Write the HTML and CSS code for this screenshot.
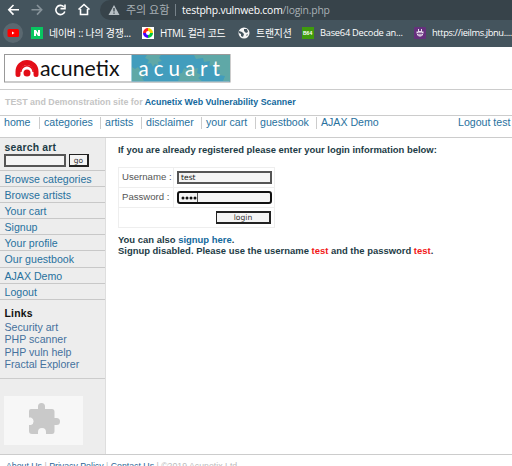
FILE: index.html
```html
<!DOCTYPE html>
<html lang="ko">
<head>
<meta charset="utf-8">
<title>login page</title>
<link rel="stylesheet" href="styles.css">
</head>
<body>
<header class="browser">
  <div class="toolbar">
    <svg class="controls" width="100" height="20" viewBox="0 0 100 20" fill="none" stroke="#fff" stroke-width="1.6">
      <path d="M19 9.800H9M13.500 5L8.800 9.800L13.500 14.600"/>
      <path stroke="#87939a" d="M31.500 9.800H41.500M37 5L41.700 9.800L37 14.600"/>
      <path d="M63.800 6.800A4.600 4.600 0 1 0 64.800 11.500M65 4.500V8.600H60.500"/>
      <path d="M78.500 9.500L84 4.500L89.500 9.500M80.500 9V14.500H87.500V9"/>
    </svg>
    <div class="address">
      <svg width="12" height="11" viewBox="0 0 12 11"><path fill="#b7bfc4" d="M6 0L11.500 10H.5Z"/><path stroke="#37434a" stroke-width="1.300" d="M6 3V6.500M6 7.500V8.800"/></svg>
      <span class="warn">주의 요함</span><i></i><span class="url">testphp.vulnweb.com<b>/login.php</b></span>
    </div>
  </div>
  <nav class="bookmarks">
    <svg class="tube" width="20" height="20" viewBox="0 0 20 20"><circle cx="10" cy="10" r="10" fill="#5a6870"/><rect x="4.500" y="6" width="11.500" height="8" rx="1.500" fill="#f00"/><path fill="#fff" d="M9 8.500V11.500L11.500 10Z"/></svg>
    <span class="bm naver"><svg width="12" height="12" viewBox="0 0 12 12"><rect width="12" height="12" fill="#08c560"/><path fill="#fff" d="M3 3H5L7 6V3H9V9H7L5 6V9H3Z"/></svg><em>네이버 :: 나의 경쟁...</em></span>
    <span class="bm color"><svg width="12" height="12" viewBox="0 0 12 12"><rect width="12" height="12" fill="#fff"/><g fill="none" stroke-width="3"><path stroke="#f22" d="M2.500 6A3.500 3.500 0 0 1 6 2.500"/><path stroke="#f8d000" d="M6 2.500A3.500 3.500 0 0 1 9.500 6"/><path stroke="#00c83c" d="M9.500 6A3.500 3.500 0 0 1 6 9.500"/><path stroke="#40f" d="M6 9.500A3.500 3.500 0 0 1 2.500 6"/></g></svg><em>HTML 컬러 코드</em></span>
    <span class="bm trans"><svg width="12" height="12" viewBox="0 0 12 12"><circle cx="6" cy="6" r="5.500" fill="#f5f5f5"/><path fill="#44545d" d="M1 4L4 5L6 7L5 10L3 9L3 7L1 6ZM6 2L9 2L10 5L8 6L6 4ZM8 8L10 7L9 9Z"/></svg><em>트랜지션</em></span>
    <span class="bm base"><svg width="12" height="12" viewBox="0 0 12 12"><rect width="12" height="12" fill="#3f9b0c"/><text class="badge" x="1" y="8">B64</text></svg><em>Base64 Decode an...</em></span>
    <span class="bm lms"><svg width="12" height="12" viewBox="0 0 12 12"><rect width="12" height="12" rx="1" fill="#65307d"/><path fill="#e9dfee" d="M4 2H5V4H7V2H8V4.500H9.500V6.500H9V8L7 9.500H5L3 8V6.500H2.500V4.500H4Z"/><path stroke="#65307d" stroke-width=".7" d="M3 6.500H9M5 5V8.500M7 5V8.500"/></svg><em>https://ieilms.jbnu....</em></span>
  </nav>
</header>
<div class="mast">
  <svg width="227" height="29" viewBox="0 0 227 29">
    <rect x=".5" y=".5" width="225.500" height="27.500" fill="#fff" stroke="#999"/>
    <rect x="127.500" y="1" width="98.500" height="26.500" fill="#429dbd"/>
    <g fill="#6cae9f" opacity=".7">
      <path d="M128 13L131 15L134 13L136 16L140 17L138 20L141 22L138 24L140 27H128Z"/>
      <path d="M143 1H157L155 4L158 7L154 8L155 12L151 10L149 13L147 9L143 10L145 6L141 4Z"/>
      <path d="M174 27L176 23L173 20L178 19L180 14L184 16L186 11L189 15L194 14L193 19L198 21L194 24L198 27Z"/>
      <path d="M190 1H226V27H219L221 22L215 21L216 16L210 17L211 11L205 12L206 7L200 8L199 4L192 5Z"/>
    </g>
    <path fill="none" stroke="#e30d17" stroke-width="5" stroke-linecap="round" d="M14 20.500V17.500A9 9 0 0 1 32 17.500V20.500"/><path fill="none" stroke="#e30d17" stroke-width="1.500" d="M16.800 18A6.200 6.200 0 0 1 29.200 18"/><circle cx="23" cy="19" r="3.500" fill="#e30d17"/>
    <text class="word" x="36" y="21.500" textLength="79.500" lengthAdjust="spacingAndGlyphs">acunetix</text>
    <text class="word art" x="134.500" y="21.500">acuart</text>
  </svg>
</div>
<div class="tag">TEST and Demonstration site for <a>Acunetix Web Vulnerability Scanner</a></div>
<nav class="menu"><a>home</a><a>categories</a><a>artists</a><a>disclaimer</a><a>your cart</a><a>guestbook</a><a>AJAX Demo</a><a class="out">Logout test</a></nav>
<div class="columns">
  <aside>
    <h3>search art</h3>
    <div class="search"><span class="field"></span><span class="go">go</span></div>
    <ul class="cats"><li>Browse categories</li><li>Browse artists</li><li>Your cart</li><li>Signup</li><li>Your profile</li><li>Our guestbook</li><li>AJAX Demo</li><li>Logout</li></ul>
    <div class="links"><h3>Links</h3><a>Security art</a><a>PHP scanner</a><a>PHP vuln help</a><a>Fractal Explorer</a></div>
    <div class="plugin"><svg width="33" height="33" viewBox="0 0 33 33"><path fill="#c9c9c9" d="M3 7H10V4.500A3.500 3.500 0 0 1 17 4.500V7H24Q26.500 7 26.500 10V16H28.500A3.500 3.500 0 0 1 28.500 23H26.500V29Q26.500 32 24 32H18V30A4 4 0 0 0 10 30V32H4Q1 32 1 29V23H3A4 4 0 0 0 3 15.500H1V9Q1 7 3 7Z"/></svg></div>
  </aside>
  <main>
    <h2>If you are already registered please enter your login information below:</h2>
    <div class="form">
      <span class="cell">Username :</span><span class="cell"><span class="field">test</span></span>
      <span class="cell">Password :</span><span class="cell"><span class="field pass"><svg width="20" height="9" viewBox="0 0 20 9"><g fill="#111"><circle cx="2" cy="5" r="1.500"/><circle cx="6" cy="5" r="1.500"/><circle cx="10" cy="5" r="1.500"/><circle cx="14" cy="5" r="1.500"/></g><path d="M16.500 0V9" stroke="#555"/></svg></span></span>
      <span class="cell wide"><span class="login">login</span></span>
    </div>
    <p class="also">You can also <a>signup here</a>.</p>
    <p class="note">Signup disabled. Please use the username <b>test</b> and the password <b>test</b>.</p>
  </main>
</div>
<footer><a>About Us</a> | <a>Privacy Policy</a> | <a>Contact Us</a> | ©2019 Acunetix Ltd</footer>
</body>
</html>
```
FILE: styles.css
```css
* { box-sizing: border-box; }
body { margin: 0; width: 512px; height: 466px; overflow: hidden; background: #fff; color: #1d3c46; font-family: "Liberation Sans", Arial, sans-serif; font-size: 10.6px; }
h2, h3, p, ul { margin: 0; padding: 0; }
svg { display: block; flex: none; }
.browser { height: 47px; background: #44545d; color: #fff; font-family: "Open Sans", "Noto Sans CJK KR", sans-serif; white-space: nowrap; }
.toolbar { height: 20px; display: flex; }
.address { flex: 1; display: flex; align-items: center; padding-left: 8px; background: #37434a; border-radius: 10px 0 0 10px; font-size: 11px; line-height: 20px; }
.warn { width: 45px; margin-left: 6px; color: #a8b0b5; font-size: 11px; }
.address i { width: 1px; height: 12px; margin: 0 6px 0 4px; background: #77828a; }
.url { font-size: 10.4px; letter-spacing: -.2px; }
.url b { font-weight: 400; color: #a8b0b5; }
.bookmarks { height: 27px; display: flex; align-items: center; padding: 0 0 1px 3px; font-size: 9.3px; letter-spacing: -.25px; }
.bm { display: flex; flex: none; align-items: center; gap: 6px; }
.bm em { font-style: normal; line-height: 20px; }
.naver { width: 111px; margin-left: 8px; }
.naver em { font-size: 9.9px; letter-spacing: -.15px; }
.color { width: 96px; }
.color em { font-size: 9.9px; letter-spacing: -.3px; }
.trans { width: 64px; }
.trans em { font-size: 9.9px; letter-spacing: -.2px; }
.base { width: 112px; }
.lms em { letter-spacing: -.38px; }
.badge { font: bold 5px "Liberation Sans", sans-serif; letter-spacing: 0; fill: #fff; }
.mast { height: 43px; padding: 7px 0 0 4px; border-bottom: 1px solid #ccc; }
.word { font: 20.5px Lato, sans-serif; fill: #111; }
.art { fill: #fff; letter-spacing: 5px; }
.tag { height: 26px; padding-left: 5px; line-height: 25px; border-bottom: 1px solid #ccc; font-size: 8.86px; font-weight: 700; color: #c4c4c4; white-space: nowrap; }
.tag a { color: #12689c; }
.menu { display: grid; grid-template-columns: 35px 61px 41px 60px 54px 61px 138px 1fr; height: 22px; padding: 1px 0 0 4px; border-bottom: 1px solid #ccc; line-height: 11px; color: #28719e; white-space: nowrap; }
.menu a { height: 12px; }
.menu a + a { border-left: 1px solid #ccc; padding-left: 4px; }
.menu .out { border: 0; }
.columns { display: flex; height: 317px; border-bottom: 1px solid #ccc; }
aside { width: 106px; background: #ededed; border-right: 1px solid #dedede; color: #28719e; white-space: nowrap; }
h3 { font-size: 10.4px; line-height: 12px; color: #1d3c46; letter-spacing: .2px; }
aside > h3 { padding: 4px 0 0 4.5px; }
.search { display: flex; gap: 3px; height: 16px; padding-left: 4px; font: 8px/10px "DejaVu Sans", sans-serif; }
.search .field { width: 62px; height: 13px; }
.field { display: block; border: 2px solid #555; background: #f4f4f4; }
.go { width: 20px; height: 13px; border: 2px solid #222; border-width: 1px 2px 2px 1px; background: #f4f4f4; color: #333; text-align: center; font-size: 7.5px; line-height: 12px; }
.cats { list-style: none; border-top: 1px solid #c8c8c8; }
.cats li { height: 16.1px; padding-left: 4.5px; line-height: 16px; border-bottom: 1px solid #c8c8c8; }
.links { height: 79px; padding: 8px 0 0 4.5px; border-bottom: 1px solid #ccc; color: #45719d; }
.links h3 { color: #111; height: 13.4px; }
.links a { display: block; line-height: 12.3px; }
.plugin { display: flex; align-items: center; justify-content: center; width: 79px; height: 49px; margin: 17px 0 0 4px; background: #f7f7f7; }
.plugin svg { margin: 0 0 3px 1px; }
main { padding: 6px 0 0 12px; white-space: nowrap; }
h2 { font-size: 9.45px; line-height: 12px; }
.form { display: grid; grid-template-columns: 55px 101px; grid-template-rows: 20px 20px 20px; width: 157px; margin-top: 11px; border: solid #eee; border-width: 1px 0 0 1px; color: #555; font-size: 9.6px; }
.cell { padding: 3px; border: solid #eee; border-width: 0 1px 1px 0; line-height: 12px; }
.cell .field { width: 95px; height: 13px; padding-left: 2px; font: 7.6px/10px "DejaVu Sans", sans-serif; color: #222; }
.cell .pass { border-color: #111; border-radius: 3px; }
.wide { grid-column: 1 / 3; display: flex; justify-content: flex-end; }
.login { width: 55px; height: 13px; border: 1px solid #222; border-width: 2px 2px 2px 1px; background: #f4f4f4; color: #333; font: 7.6px/10px "DejaVu Sans", sans-serif; text-align: center; }
p { font-size: 9.45px; line-height: 11px; font-weight: 700; }
.also { margin-top: 6px; }
.also a { color: #12689c; }
.note b { color: #f21818; }
footer { padding: 6px 0 0 6px; font-size: 8.75px; line-height: 10px; color: #bbb; white-space: nowrap; }
footer a { color: #2c6797; }
```
